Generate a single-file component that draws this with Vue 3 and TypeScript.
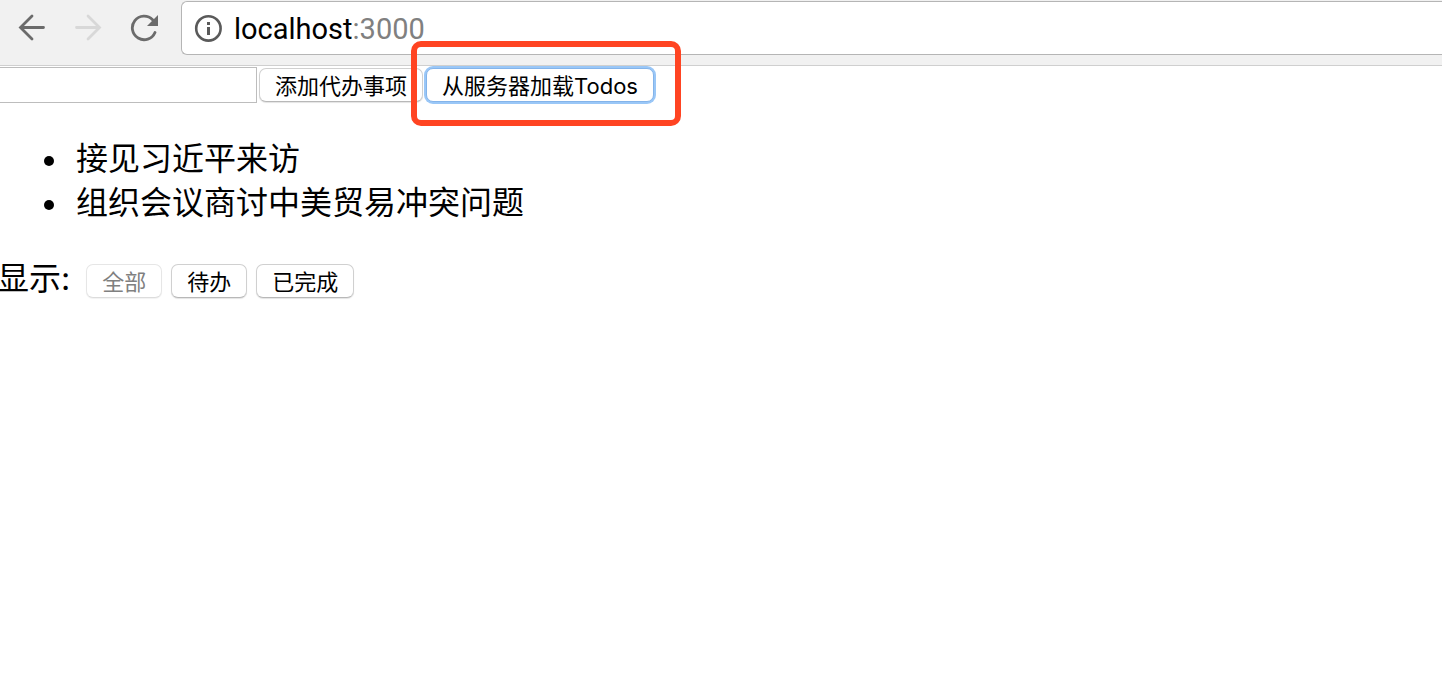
<script setup lang="ts">
import { computed, ref } from 'vue'

type Filter = 'all' | 'active' | 'completed'

interface Todo {
  id: number
  text: string
  completed: boolean
}

const draft = ref('')
const filter = ref<Filter>('all')
const todos = ref<Todo[]>([
  { id: 1, text: '接见习近平来访', completed: false },
  { id: 2, text: '组织会议商讨中美贸易冲突问题', completed: false },
])
const filters: { key: Filter; label: string }[] = [
  { key: 'all', label: '全部' },
  { key: 'active', label: '待办' },
  { key: 'completed', label: '已完成' },
]

const visibleTodos = computed(() =>
  todos.value.filter((t) => filter.value === 'all' || t.completed === (filter.value === 'completed')),
)

function addTodo(): void {
  const text = draft.value.trim()
  if (!text) return
  todos.value.push({ id: Date.now(), text, completed: false })
  draft.value = ''
}
</script>

<template>
  <div class="browser">
    <header class="toolbar">
      <nav class="nav">
        <button class="nav-button" type="button" aria-label="Back">
          <svg width="28" height="28" viewBox="0 0 28 28" fill="none" stroke="#6b6b6b" stroke-width="2.8" stroke-linecap="round">
            <path d="M25.5 13.5H3M14 2L2.5 13.5L14 25" />
          </svg>
        </button>
        <button class="nav-button" type="button" aria-label="Forward" disabled>
          <svg width="28" height="28" viewBox="0 0 28 28" fill="none" stroke="#d8d8d8" stroke-width="2.8" stroke-linecap="round">
            <path d="M2.5 13.5H25M14 2L25.5 13.5L14 25" />
          </svg>
        </button>
        <button class="nav-button" type="button" aria-label="Reload">
          <svg width="28" height="28" viewBox="0 0 28 28">
            <path d="M22.6 5.7A11.8 11.8 0 1 0 25 18.5" fill="none" stroke="#6b6b6b" stroke-width="2.8" stroke-linecap="round" />
            <path d="M28 1V12H17Z" fill="#6b6b6b" />
          </svg>
        </button>
      </nav>
      <div class="address">
        <svg width="28" height="28" viewBox="0 0 28 28" aria-hidden="true">
          <circle cx="14.4" cy="14.4" r="12.2" fill="none" stroke="#5a5a5a" stroke-width="2.6" />
          <path d="M13 8h3v3h-3zM13 13h3v8h-3z" fill="#5a5a5a" />
        </svg>
        <span class="url">localhost<span class="port">:3000</span></span>
      </div>
    </header>

    <main class="page">
      <form class="entry" @submit.prevent="addTodo">
        <input v-model="draft" class="draft" type="text" aria-label="代办事项" />
        <button class="button" type="submit">添加代办事项</button>
        <span class="marked">
          <button class="button focused" type="button">从服务器加载Todos</button>
        </span>
      </form>
      <ul class="todos">
        <li v-for="todo in visibleTodos" :key="todo.id" class="todo">{{ todo.text }}</li>
      </ul>
      <div class="filters">
        <span class="filters-label">显示:</span>
        <button
          v-for="item in filters"
          :key="item.key"
          class="button"
          type="button"
          :disabled="filter === item.key"
          @click="filter = item.key"
        >{{ item.label }}</button>
      </div>
    </main>
  </div>
</template>

<style>
body {
  background: #fff;
}
</style>

<style scoped>
.browser {
  overflow: hidden;
  color: #000;
  font-family: Inter, "Noto Sans CJK SC", sans-serif;
}
.toolbar {
  display: flex;
  align-items: flex-start;
  padding-top: 1px;
  padding-bottom: 10px;
  background: #f1f1f1;
  border-bottom: 1px solid #cfcfcf;
}
.nav {
  display: flex;
  gap: 28px;
  padding: 13px 23px 0 18px;
}
.nav-button {
  display: block;
  width: 28px;
  height: 28px;
  padding: 0;
  border: 0;
  background: none;
}
.nav-button svg {
  display: block;
}
.address {
  display: flex;
  flex: 1;
  align-items: center;
  gap: 12px;
  box-sizing: border-box;
  height: 54px;
  padding-left: 12px;
  border: 1px solid #b5b5b5;
  border-right: 0;
  border-radius: 6px 0 0 6px;
  background: #fff;
}
.url {
  padding-top: 2px;
  font-family: Roboto, sans-serif;
  font-size: 29px;
  line-height: 34px;
}
.port {
  color: #808080;
}
.entry {
  display: flex;
  align-items: center;
  padding-top: 1px;
}
.draft {
  box-sizing: border-box;
  width: 257px;
  height: 36px;
  margin-right: 2px;
  padding: 0 4px;
  border: 1px solid #bdbdbd;
  border-left: 0;
  font: inherit;
  font-size: 22px;
}
.button {
  box-sizing: border-box;
  height: 34px;
  padding: 2px 15px 0;
  border: 1px solid #d0d0d0;
  border-bottom-color: #b8b8b8;
  border-radius: 7px;
  background: #fff;
  box-shadow: 0 1px 1px #e4e4e4;
  color: #000;
  font-family: inherit;
  font-size: 22px;
  line-height: 30px;
  white-space: nowrap;
}
.button:disabled {
  border-color: #e6e6e6;
  border-bottom-color: #dcdcdc;
  box-shadow: 0 1px 1px #f2f2f2;
  color: #808080;
}
.marked {
  position: relative;
  display: flex;
  margin-left: 3px;
}
.marked::after {
  content: "";
  position: absolute;
  inset: -27px -27px -24px -15px;
  border: 6px solid #ff4422;
  border-radius: 10px;
  pointer-events: none;
}
.focused {
  border-color: #84b4ea;
  box-shadow: 0 0 0 2px #9ac7f7;
}
.todos {
  margin: 34px 0 32px;
  padding-left: 44px;
  list-style: none;
  font-size: 32px;
  line-height: 44px;
}
.todo {
  display: flex;
  align-items: center;
  gap: 22px;
}
.todo::before {
  content: "";
  width: 10px;
  height: 10px;
  margin-top: 4px;
  border-radius: 50%;
  background: #000;
}
.filters {
  display: flex;
  align-items: flex-end;
  gap: 9px;
}
.filters .button {
  margin-bottom: 3px;
}
.filters-label {
  margin-left: -3px;
  margin-right: 7px;
  font-size: 32px;
  line-height: 44px;
}
</style>
